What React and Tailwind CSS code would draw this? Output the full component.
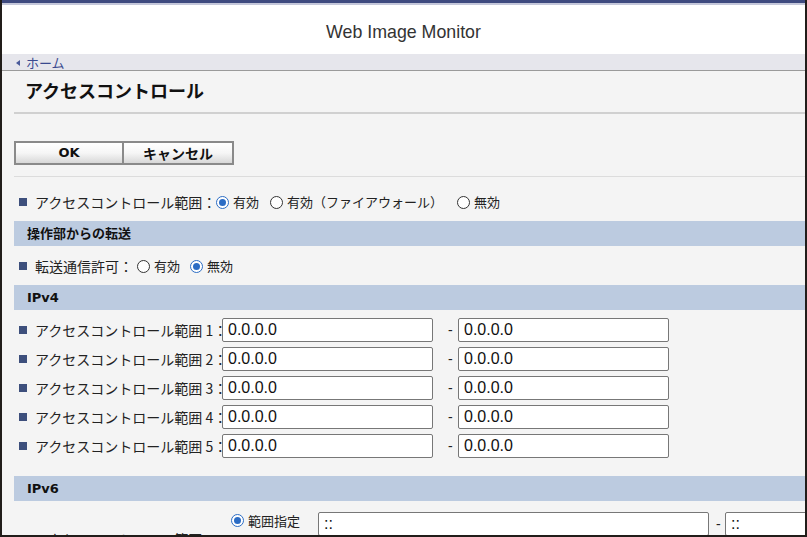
import React from 'react';

const jp = "font-['Noto_Sans_CJK_JP','Noto_Sans',sans-serif]";
const vb = "font-['DejaVu_Sans','Noto_Sans_CJK_JP',sans-serif]";

const Bullet = () => <span className="inline-block w-[8px] h-[8px] bg-[#3d4f7c] ml-[5px] mr-[8px] shrink-0" />;

const Radio = ({ checked }) => (
  <span
    className={`inline-flex items-center justify-center w-[13px] h-[13px] rounded-full border shrink-0 bg-white ${
      checked ? 'border-[#2b6cc4] border-[1.5px]' : 'border-[#333]'
    }`}
  >
    {checked && <span className="w-[7px] h-[7px] rounded-full bg-[#2b6cc4]" />}
  </span>
);

const RadioOption = ({ checked, label, className = '' }) => (
  <span className={`flex items-center shrink-0 whitespace-nowrap ${className}`}>
    <Radio checked={checked} />
    <span className="ml-[4px] text-[13px] text-[#222]">{label}</span>
  </span>
);

const SectionHeader = ({ title, className = '' }) => (
  <div className={`h-[25px] bg-[#bccbe0] flex items-center pl-[13px] text-[13px] font-bold text-[#111] ${vb} ${className}`}>
    {title}
  </div>
);

const TextBox = ({ value, width }) => (
  <div
    className={`h-[24px] shrink-0 bg-white border border-[#777] rounded-[2px] flex items-center pl-[5px] text-[16px] text-[#111] font-['Liberation_Sans',sans-serif] ${width}`}
  >
    {value}
  </div>
);

const Dash = ({ width }) => (
  <span className={`shrink-0 text-[14px] leading-[24px] text-[#222] font-['Liberation_Sans',sans-serif] ${width}`}>-</span>
);

const ipv4Rows = [1, 2, 3, 4, 5];

export default function App() {
  return (
    <div className={`w-[807px] h-[537px] overflow-hidden bg-[#f4f4f4] border-x-2 border-b-2 border-[#211d1a] flex flex-col ${jp}`}>
      {/* top bar */}
      <div className="h-[3px] bg-[#3e4a7f] shrink-0" />
      <div className="h-[2px] bg-[#c4c7da] shrink-0" />
      <div className="h-[49px] bg-white flex items-center justify-center pt-[5px] shrink-0">
        <span className="text-[17.8px] text-[#333] font-['Liberation_Sans',sans-serif]">Web Image Monitor</span>
      </div>

      {/* breadcrumb */}
      <div className="h-[17px] bg-[#e6e6ec] border-b border-[#9a9a9a] flex items-end pl-[14px] shrink-0">
        <span className="w-0 h-0 border-y-[3px] border-y-transparent border-r-[4px] border-r-[#4a5a9a] mb-[4px]" />
        <span className="ml-[6px] text-[13px] leading-[15px] text-[#3a4a8f]">ホーム</span>
      </div>

      <div className="pl-[12px] flex flex-col shrink-0">
        <div className="h-[41px] flex items-center pl-[11px] pb-[3px] text-[18px] font-bold text-[#111]">アクセスコントロール</div>
        <div className="h-[2px] bg-[#d0d0d0]" />

        {/* buttons */}
        <div className={`flex mt-[27px] ${vb}`}>
          <button className="w-[110px] h-[24px] border-2 border-[#8a8a8a] bg-gradient-to-b from-white via-[#f6f6f6] to-[#d8d8d8] text-[13px] font-bold text-[#111]">
            OK
          </button>
          <button className={`w-[110px] h-[24px] border-2 border-l-0 border-[#8a8a8a] bg-gradient-to-b from-white via-[#f6f6f6] to-[#d8d8d8] text-[14px] font-bold text-[#111] ${jp}`}>
            キャンセル
          </button>
        </div>
        <div className="h-px bg-[#dcdcdc] mt-[11px]" />

        {/* access control range */}
        <div className="h-[24px] mt-[13px] flex items-center">
          <Bullet />
          <span className="text-[14px] text-[#222] w-[181px] shrink-0 whitespace-nowrap">アクセスコントロール範囲：</span>
          <RadioOption checked label="有効" />
          <RadioOption label="有効（ファイアウォール）" className="ml-[11px]" />
          <RadioOption label="無効" className="ml-[14px]" />
        </div>

        <SectionHeader title="操作部からの転送" className="mt-[7px]" />
        <div className="h-[24px] mt-[8px] flex items-center">
          <Bullet />
          <span className="text-[14px] text-[#222] w-[102px] shrink-0 whitespace-nowrap">転送通信許可：</span>
          <RadioOption label="有効" />
          <RadioOption checked label="無効" className="ml-[10px]" />
        </div>

        <SectionHeader title="IPv4" className="mt-[7px]" />
        <div className="flex flex-col gap-[5px] mt-[8px]">
          {ipv4Rows.map((n) => (
            <div key={n} className="h-[24px] flex items-center">
              <Bullet />
              <span className="text-[14px] text-[#222] w-[187px] shrink-0 whitespace-nowrap">アクセスコントロール範囲 {n}：</span>
              <TextBox value="0.0.0.0" width="w-[211px]" />
              <Dash width="w-[25px] pl-[15px]" />
              <TextBox value="0.0.0.0" width="w-[211px]" />
            </div>
          ))}
        </div>

        <SectionHeader title="IPv6" className="mt-[18px]" />
        <div className="flex mt-[11px]">
          <div className="w-[217px] shrink-0 flex items-center self-stretch">
            <Bullet />
            <span className="text-[14px] text-[#222] whitespace-nowrap">アクセスコントロール範囲：</span>
          </div>
          <div className="flex flex-col gap-[6px]">
            <div className="h-[24px] flex items-center">
              <RadioOption checked label="範囲指定" className="w-[87px] self-start mt-[-1px]" />
              <TextBox value="::" width="w-[391px]" />
              <Dash width="w-[16px] pl-[7px]" />
              <TextBox value="::" width="w-[211px]" />
            </div>
            <div className="h-[24px]" />
          </div>
        </div>
      </div>
    </div>
  );
}
